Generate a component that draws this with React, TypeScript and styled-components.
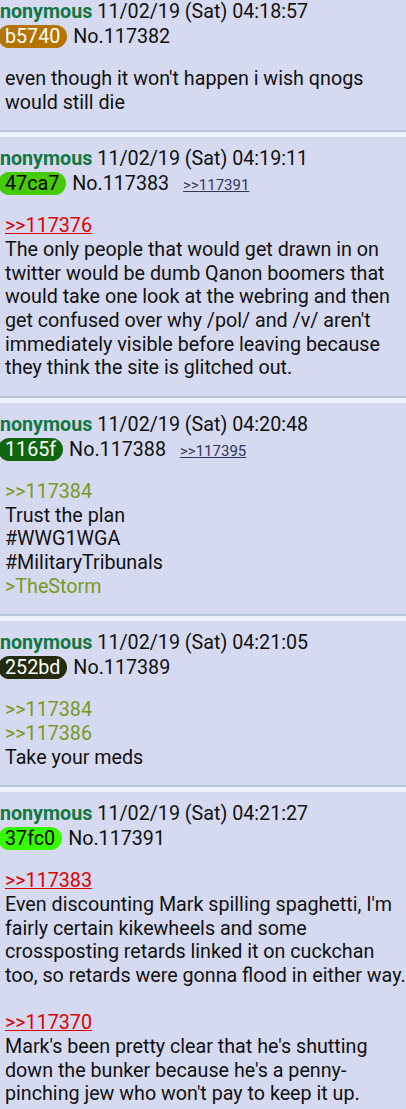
import React from "react";
import styled, { createGlobalStyle } from "styled-components";

const GlobalStyle = createGlobalStyle`
  html, body {
    margin: 0;
    padding: 0;
    background: #eef2ff;
    font-family: Roboto, "Noto Sans", Arial, sans-serif;
    color: #000;
    overflow: hidden;
  }
`;

const Thread = styled.div`
  margin-top: -10px;
  width: 406px;
`;

const Post = styled.div`
  background: #d6daf0;
  border-bottom: 2px solid #b7c5d9;
  margin-bottom: 5px;
  padding: 10px 0 16px 5px;
  font-size: 19.7px;
  color: #111;
`;

const NameLine = styled.div`
  margin-left: -18px;
  height: 24px;
  line-height: 24px;
  white-space: nowrap;
`;

const Name = styled.span`
  font-weight: 700;
  color: #117743;
  margin-right: 5px;
`;

const InfoLine = styled.div`
  display: flex;
  align-items: center;
  height: 25px;
  margin-left: -7px;
  white-space: nowrap;
`;

const Badge = styled.span<{ $bg: string; $fg: string }>`
  display: inline-block;
  height: 23px;
  line-height: 23px;
  padding: 0 7px;
  border-radius: 12px;
  background: ${(p) => p.$bg};
  color: ${(p) => p.$fg};
`;

const PostNo = styled.span`
  margin-left: 6px;
`;

const Backlink = styled.a`
  margin-left: 14px;
  margin-top: 3px;
  font-size: 15px;
  color: #34345c;
  text-decoration: underline;
`;

const Body = styled.div`
  margin-top: 18px;
  margin-right: -4px;
  line-height: 23.67px;
`;

const Quote = styled.a`
  color: #dd0000;
  text-decoration: underline;
`;

const Green = styled.span`
  color: #789922;
`;

type PostData = {
  time: string;
  id: string;
  fg: string;
  no: string;
  backlink?: string;
  body: React.ReactNode;
};

const idColor = (id: string) => "#" + id.slice(0, 4) + "0" + id.slice(4);

const posts: PostData[] = [
  {
    time: "04:18:57",
    id: "b5740",
    fg: "#fff",
    no: "117382",
    body: <>even though it won't happen i wish qnogs would still die</>,
  },
  {
    time: "04:19:11",
    id: "47ca7",
    fg: "#000",
    no: "117383",
    backlink: "117391",
    body: (
      <>
        <Quote>&gt;&gt;117376</Quote>
        <br />
        The only people that would get drawn in on twitter would be dumb Qanon
        boomers that would take one look at the webring and then get confused
        over why /pol/ and /v/ aren't immediately visible before leaving because
        they think the site is glitched out.
      </>
    ),
  },
  {
    time: "04:20:48",
    id: "1165f",
    fg: "#fff",
    no: "117388",
    backlink: "117395",
    body: (
      <>
        <Green>&gt;&gt;117384</Green>
        <br />
        Trust the plan
        <br />
        #WWG1WGA
        <br />
        #MilitaryTribunals
        <br />
        <Green>&gt;TheStorm</Green>
      </>
    ),
  },
  {
    time: "04:21:05",
    id: "252bd",
    fg: "#fff",
    no: "117389",
    body: (
      <>
        <Green>&gt;&gt;117384</Green>
        <br />
        <Green>&gt;&gt;117386</Green>
        <br />
        Take your meds
      </>
    ),
  },
  {
    time: "04:21:27",
    id: "37fc0",
    fg: "#000",
    no: "117391",
    body: (
      <>
        <Quote>&gt;&gt;117383</Quote>
        <br />
        Even discounting Mark spilling spaghetti, I'm fairly certain kikewheels
        and some crossposting retards linked it on cuckchan too, so retards were
        gonna flood in either way.
        <br />
        <br />
        <Quote>&gt;&gt;117370</Quote>
        <br />
        Mark's been pretty clear that he's shutting down the bunker because he's
        a penny-pinching jew who won't pay to keep it up.
      </>
    ),
  },
];

export default function App() {
  return (
    <>
      <GlobalStyle />
      <Thread>
        {posts.map((p) => (
          <Post key={p.no}>
            <NameLine>
              <Name>Anonymous</Name>11/02/19 (Sat) {p.time}
            </NameLine>
            <InfoLine>
              <Badge $bg={idColor(p.id)} $fg={p.fg}>
                {p.id}
              </Badge>
              <PostNo>No.{p.no}</PostNo>
              {p.backlink && <Backlink>&gt;&gt;{p.backlink}</Backlink>}
            </InfoLine>
            <Body>{p.body}</Body>
          </Post>
        ))}
      </Thread>
    </>
  );
}
